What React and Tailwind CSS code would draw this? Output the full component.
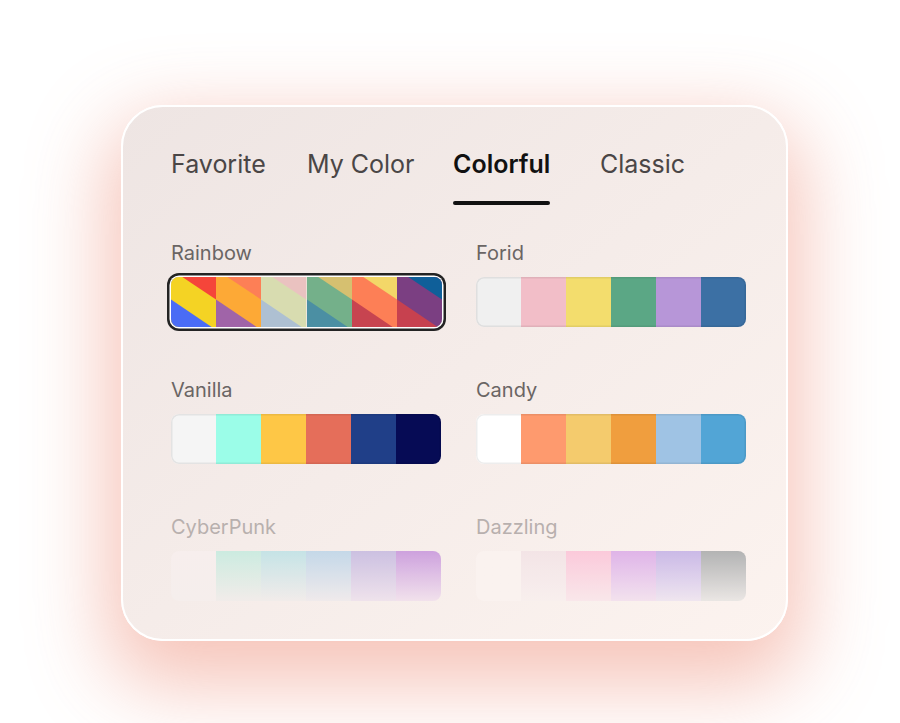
import React from 'react';

const tabs = [
  { name: 'Favorite', w: 'w-[136px]' },
  { name: 'My Color', w: 'w-[146px]' },
  { name: 'Colorful', w: 'w-[147px]' },
  { name: 'Classic', w: 'w-auto' },
];

const rainbow = [
  ['#f5453a', '#f4d324', '#4a6cf5'],
  ['#fd7f56', '#fda936', '#a064a8'],
  ['#eac2c0', '#d8dcb0', '#aec0d2'],
  ['#d6c070', '#74b08a', '#4b8fa3'],
  ['#f3d768', '#fd7f56', '#c74450'],
  ['#0f5f99', '#7b3f82', '#c7414f'],
];

const palettes = [
  { name: 'Forid', colors: ['bg-[#f0f0f0]', 'bg-[#f2bec8]', 'bg-[#f3dd6d]', 'bg-[#5ba785]', 'bg-[#b796d8]', 'bg-[#3c70a4]'] },
  { name: 'Vanilla', colors: ['bg-[#f5f5f5]', 'bg-[#9bfde8]', 'bg-[#fec746]', 'bg-[#e56e5a]', 'bg-[#203f88]', 'bg-[#060b55]'] },
  { name: 'Candy', colors: ['bg-[#ffffff]', 'bg-[#fe9a6e]', 'bg-[#f4cb6d]', 'bg-[#f09e3e]', 'bg-[#9fc3e4]', 'bg-[#52a5d6]'] },
  {
    name: 'CyberPunk',
    faded: true,
    colors: [
      'bg-linear-to-b from-[#f8efee] to-[#f6efed]',
      'bg-linear-to-b from-[#c5ebdf] to-[#f1ecea]',
      'bg-linear-to-b from-[#bde2e6] to-[#f1ecea]',
      'bg-linear-to-b from-[#bcd5e8] to-[#efeaec]',
      'bg-linear-to-b from-[#c5b9e0] to-[#eee1ec]',
      'bg-linear-to-b from-[#c795dc] to-[#f1e0ec]',
    ],
  },
  {
    name: 'Dazzling',
    faded: true,
    colors: [
      'bg-linear-to-b from-[#fbf3f0] to-[#fbf3f0]',
      'bg-linear-to-b from-[#f3e3e6] to-[#f8efee]',
      'bg-linear-to-b from-[#fcc3d8] to-[#f9e6ea]',
      'bg-linear-to-b from-[#dbaae8] to-[#f2e0ee]',
      'bg-linear-to-b from-[#c3b0e6] to-[#eee4f0]',
      'bg-linear-to-b from-[#a7a9aa] to-[#e8e5e3]',
    ],
  },
];

const RainbowSwatch = () => (
  <div className="relative flex h-[50px] w-[271px] overflow-hidden rounded-[8px] shadow-[0_0_0_1.5px_#ffffff,0_0_0_4px_#232323]">
    {rainbow.map(([top, mid, bottom], i) => (
      <svg key={i} className="h-full flex-1" viewBox="0 0 100 100" preserveAspectRatio="none">
        <rect width="100" height="100" fill={mid} />
        <polygon points="25,0 100,0 100,45" fill={top} />
        <polygon points="0,45 0,100 90,100" fill={bottom} />
      </svg>
    ))}
  </div>
);

const Swatch = ({ colors, faded }) => (
  <div className={`relative flex h-[50px] w-[270px] overflow-hidden rounded-[8px] ${faded ? 'opacity-85' : ''}`}>
    {colors.map((c, i) => (
      <div key={i} className={`h-full flex-1 ${c}`} />
    ))}
    {!faded && (
      <div className="pointer-events-none absolute inset-0 rounded-[8px] shadow-[inset_0_0_0_1.5px_rgba(0,0,0,0.07)]" />
    )}
  </div>
);

const Cell = ({ name, faded, children }) => (
  <div className="flex flex-col">
    <div className={`mb-[10px] h-[28px] text-[20px] leading-[28px] ${faded ? 'text-[#b8b0ae]' : 'text-[#6a6564]'}`}>{name}</div>
    {children}
  </div>
);

export default function App() {
  return (
    <div className="h-[723px] w-[900px] overflow-hidden bg-white font-['Inter',sans-serif]">
      <div className="ml-[121px] mt-[105px] h-[536px] w-[667px] rounded-[42px] border-2 border-white bg-linear-to-br from-[#eee5e3] to-[#fcf3ef] pl-[48px] pt-[41px] shadow-[0_30px_80px_14px_rgba(236,125,100,0.45)]">
        <div className="flex h-[32px] items-center text-[25px] leading-[32px]">
          {tabs.map((t) => (
            <div key={t.name} className={`shrink-0 ${t.w}`}>
              <div
                className={`relative inline-block ${t.name === 'Colorful' ? 'font-semibold text-[#111]' : 'text-[#4a4646]'}`}
              >
                {t.name}
                {t.name === 'Colorful' && (
                  <div className="absolute left-0 right-0 top-[53px] h-[4px] rounded-full bg-[#111]" />
                )}
              </div>
            </div>
          ))}
        </div>
        <div className="mt-[59px] grid w-[576px] grid-cols-[271px_270px] gap-x-[34px] gap-y-[49px]">
          <Cell name="Rainbow">
            <RainbowSwatch />
          </Cell>
          {palettes.map((p) => (
            <Cell key={p.name} name={p.name} faded={p.faded}>
              <Swatch colors={p.colors} faded={p.faded} />
            </Cell>
          ))}
        </div>
      </div>
    </div>
  );
}
